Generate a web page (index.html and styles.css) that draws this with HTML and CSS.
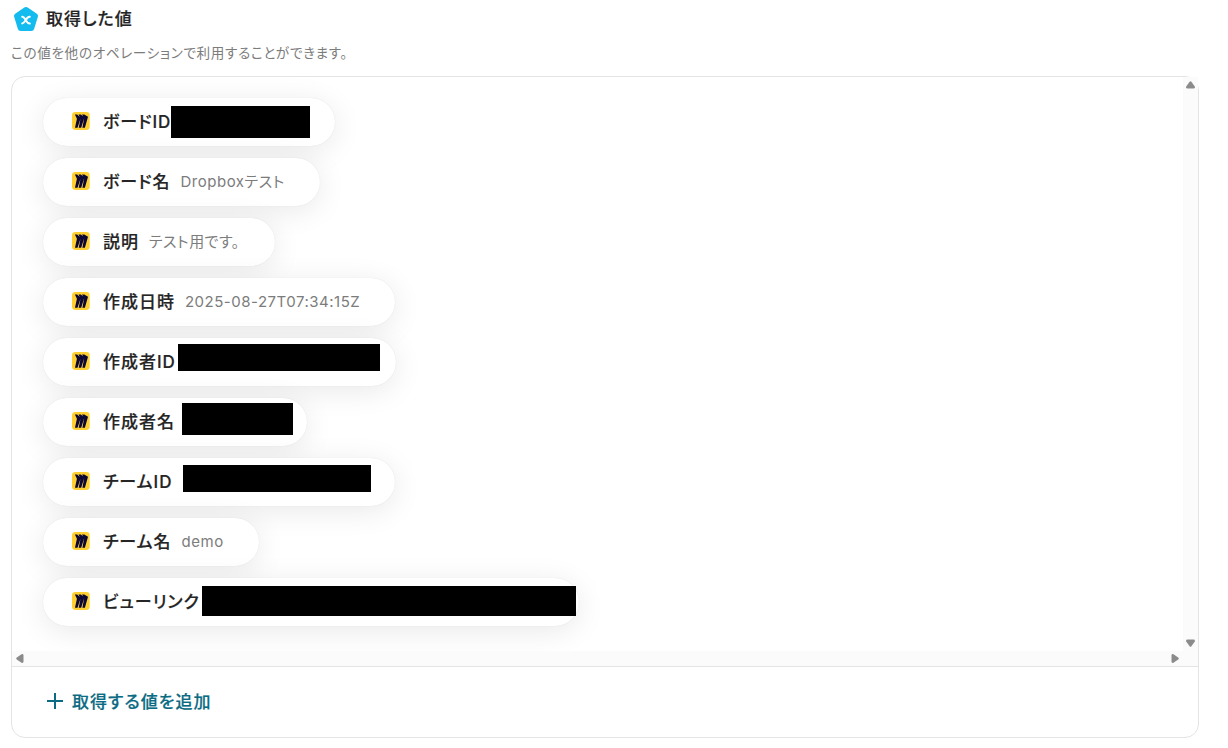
FILE: index.html
```
<!DOCTYPE html>
<html lang="ja">
<head>
    <meta charset="UTF-8">
    <meta name="viewport" content="width=device-width, initial-scale=1.0">
    <title>取得した値</title>
    <link rel="stylesheet" href="styles.css">
</head>
<body>
    <svg class="defs" width="0" height="0">
        <symbol id="miro" viewBox="0 0 18 18">
            <rect width="17.700" height="18" rx="3.400" fill="#ffd02f"/>
            <path fill="#0b0736" d="M12.300 2.400H10l1.300 2.200L8.800 2.400H6.500l1.300 2.500L5.200 2.400H2.900l2 4.400-1.900 8.900h2.500l3-9-1.800 9h2.500l3-9.600-1.800 9.600h2.500l3.100-11z"/>
        </symbol>
    </svg>

    <div class="heading">
        <svg class="heading-icon" width="24" height="24" viewBox="0 0 24 24">
            <path fill="#14bbee" d="M10.300.6a2.900 2.900 0 0 1 3.400 0l9.100 6.200a2.700 2.700 0 0 1 1 3.100l-3.700 12a2.800 2.800 0 0 1-2.700 2H6.600a2.800 2.800 0 0 1-2.700-2L.2 9.900a2.700 2.700 0 0 1 1-3.100z"/>
            <path fill="none" stroke="#fff" stroke-width="2" stroke-linecap="round" d="M8.200 9.800c3.300-.7 3.600 7.200 7.600 6.700M15.800 9.800c-4.100-.2-4.200 6.700-7.600 6.700"/>
        </svg>
        <h1>取得した値</h1>
    </div>
    <p class="description">この値を他のオペレーションで利用することができます。</p>

    <div class="card">
        <div class="scroll-area">
            <ul class="value-list">
                <li class="pill pill-board-id">
                    <svg class="pill-icon"><use href="#miro"/></svg>
                    <span class="label">ボードID</span>
                    <span class="mask"></span>
                </li>
                <li class="pill">
                    <svg class="pill-icon"><use href="#miro"/></svg>
                    <span class="label">ボード名</span>
                    <span class="value">Dropboxテスト</span>
                </li>
                <li class="pill">
                    <svg class="pill-icon"><use href="#miro"/></svg>
                    <span class="label">説明</span>
                    <span class="value">テスト用です。</span>
                </li>
                <li class="pill">
                    <svg class="pill-icon"><use href="#miro"/></svg>
                    <span class="label">作成日時</span>
                    <span class="value">2025-08-27T07:34:15Z</span>
                </li>
                <li class="pill pill-owner-id">
                    <svg class="pill-icon"><use href="#miro"/></svg>
                    <span class="label">作成者ID</span>
                    <span class="mask"></span>
                </li>
                <li class="pill pill-owner-name">
                    <svg class="pill-icon"><use href="#miro"/></svg>
                    <span class="label">作成者名</span>
                    <span class="mask"></span>
                </li>
                <li class="pill pill-team-id">
                    <svg class="pill-icon"><use href="#miro"/></svg>
                    <span class="label">チームID</span>
                    <span class="mask"></span>
                </li>
                <li class="pill">
                    <svg class="pill-icon"><use href="#miro"/></svg>
                    <span class="label">チーム名</span>
                    <span class="value">demo</span>
                </li>
                <li class="pill pill-link">
                    <svg class="pill-icon"><use href="#miro"/></svg>
                    <span class="label">ビューリンク</span>
                    <span class="mask"></span>
                </li>
            </ul>
            <div class="track track-y">
                <svg width="9" height="8" viewBox="0 0 9 8"><path d="M3.600.8q.9-1.200 1.800 0L8.800 5.500Q9.300 7.500 7.500 7.500h-6Q-.3 7.500.2 5.500z"/></svg>
                <svg width="9" height="8" viewBox="0 0 9 8"><path d="M3.600 7.200q.9 1.200 1.800 0L8.800 2.500Q9.300.5 7.500.5h-6Q-.3.5.2 2.500z"/></svg>
            </div>
            <div class="track track-x">
                <svg width="8" height="9" viewBox="0 0 8 9"><path d="M.8 3.600q-1.200.9 0 1.800L5.500 8.800Q7.500 9.300 7.500 7.500v-6Q7.500-.3 5.500.2z"/></svg>
                <svg width="8" height="9" viewBox="0 0 8 9"><path d="M7.200 3.600q1.200.9 0 1.800L2.500 8.800Q.5 9.300.5 7.500v-6Q.5-.3 2.500.2z"/></svg>
            </div>
        </div>
        <button class="add-button" type="button">
            <svg width="16" height="16" viewBox="0 0 16 16"><path d="M8 0v16M0 8h16" stroke="currentColor" stroke-width="2"/></svg>
            <span>取得する値を追加</span>
        </button>
    </div>
</body>
</html>
```
FILE: styles.css
```
:root {
    --text-color: #252525;
    --muted-color: #7c7c7c;
    --link-color: #0b6b83;
    --border-color: #e4e4e4;
    --track-color: #fbfbfb;
}

* {
    box-sizing: border-box;
}

body {
    margin: 0;
    padding: 7px 29px 0 11px;
    height: 748px;
    overflow: hidden;
    background: #fff;
    color: var(--text-color);
    font-family: Inter, 'Noto Sans CJK JP', sans-serif;
    font-feature-settings: "palt";
}

.defs {
    position: absolute;
}

.heading {
    display: flex;
    align-items: center;
    height: 24px;
    padding-left: 3px;
    gap: 8px;
}

h1 {
    margin: 0;
    font-size: 17px;
    font-weight: 500;
    line-height: 24px;
    letter-spacing: 0.06em;
    -webkit-text-stroke: 0.2px;
}

.description {
    margin: 12px 0 13px;
    color: var(--muted-color);
    font-size: 13.6px;
    line-height: 20px;
    letter-spacing: 0.048em;
}

.card {
    height: 662px;
    border: 1px solid var(--border-color);
    border-radius: 14px;
}

.scroll-area {
    display: grid;
    grid-template-columns: 1fr 15px;
    grid-template-rows: 574px 15px;
    border-bottom: 1px solid var(--border-color);
}

.value-list {
    display: flex;
    flex-direction: column;
    align-items: flex-start;
    gap: 12px;
    margin: 0;
    padding: 21px 31px;
    overflow: hidden;
    border-radius: 14px 0 0;
    list-style: none;
}

.pill {
    position: relative;
    display: flex;
    align-items: center;
    height: 48px;
    padding: 0 35px 2px 29px;
    border-radius: 24px;
    background: #fff;
    box-shadow: 0 0 1px rgba(0, 0, 0, 0.12), 0 5px 30px rgba(0, 0, 0, 0.09);
    white-space: nowrap;
}

.pill-icon {
    width: 18px;
    height: 18px;
    margin-right: 13px;
}

.label {
    padding-bottom: 2px;
    font-size: 17px;
    font-weight: 500;
    letter-spacing: 0.057em;
    -webkit-text-stroke: 0.2px;
}

.value {
    margin-left: 10px;
    padding-top: 1px;
    color: var(--muted-color);
    font-size: 15px;
    line-height: 22px;
    letter-spacing: 0.034em;
}

/* blacked out values */
.mask {
    position: absolute;
    background: #000;
}

.pill-board-id {
    width: 292px;
}

.pill-board-id .mask {
    left: 128px;
    top: 8px;
    width: 139px;
    height: 32px;
}

.pill-owner-id {
    width: 353px;
}

.pill-owner-id .mask {
    left: 135px;
    top: 6px;
    width: 202px;
    height: 27px;
}

.pill-owner-name {
    width: 264px;
}

.pill-owner-name .mask {
    left: 139px;
    top: 5px;
    width: 111px;
    height: 32px;
}

.pill-team-id {
    width: 352px;
}

.pill-team-id .mask {
    left: 140px;
    top: 7px;
    width: 188px;
    height: 27px;
}

.pill-link {
    width: 536px;
}

.pill-link .mask {
    left: 159px;
    top: 8px;
    width: 374px;
    height: 30px;
}

.track {
    display: flex;
    align-items: center;
    justify-content: space-between;
    background: var(--track-color);
    fill: #8b8b8b;
}

.track-y {
    flex-direction: column;
    padding: 4px 0;
}

.track-x {
    grid-column: 1 / 3;
    padding: 0 19px 0 4px;
}

.add-button {
    display: flex;
    align-items: center;
    gap: 9px;
    height: 70px;
    padding: 0 0 2px 35px;
    border: 0;
    background: none;
    color: var(--link-color);
    font: inherit;
    font-size: 17px;
    font-weight: 500;
    letter-spacing: 0.06em;
    font-feature-settings: "palt";
    -webkit-text-stroke: 0.2px;
}

.add-button span {
    padding-bottom: 2px;
}
```
